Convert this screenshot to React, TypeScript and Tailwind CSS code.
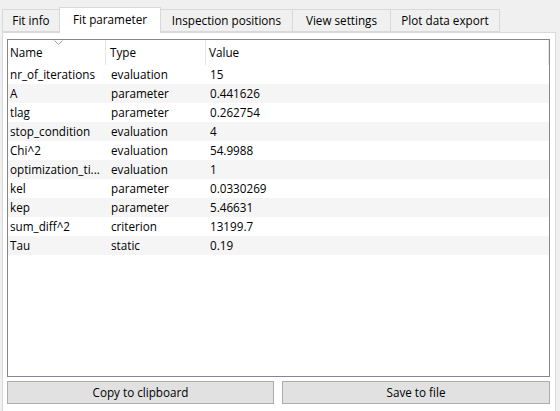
import React from "react";

const rows: [string, string, string][] = [
  ["nr_of_iterations", "evaluation", "15"],
  ["A", "parameter", "0.441626"],
  ["tlag", "parameter", "0.262754"],
  ["stop_condition", "evaluation", "4"],
  ["Chi^2", "evaluation", "54.9988"],
  ["optimization_ti...", "evaluation", "1"],
  ["kel", "parameter", "0.0330269"],
  ["kep", "parameter", "5.46631"],
  ["sum_diff^2", "criterion", "13199.7"],
  ["Tau", "static", "0.19"],
];

export default function App() {
  return (
    <div
      className="w-[560px] h-[411px] bg-[#f0f0f0] overflow-hidden text-[11.7px] text-black relative"
      style={{ fontFamily: '"Open Sans", "Noto Sans", sans-serif' }}
    >
      {/* tabs */}
      <div className="flex items-end h-[33px] pl-[2px] relative z-10">
        <div className="h-[23px] w-[57px] border border-[#d9d9d9] border-r-0 bg-[#f0f0f0] flex items-center justify-center mb-[1px]">
          Fit info
        </div>
        <div className="h-[26px] w-[102px] border border-[#d9d9d9] border-b-0 bg-white flex items-center justify-center pb-[2px]">
          Fit parameter
        </div>
        <div className="h-[23px] w-[132px] border border-[#d9d9d9] border-l-0 bg-[#f0f0f0] flex items-center justify-center mb-[1px]">
          Inspection positions
        </div>
        <div className="h-[23px] w-[98px] border border-[#d9d9d9] border-l-0 bg-[#f0f0f0] flex items-center justify-center mb-[1px]">
          View settings
        </div>
        <div className="h-[23px] w-[109px] border border-[#d9d9d9] border-l-0 bg-[#f0f0f0] flex items-center justify-center mb-[1px]">
          Plot data export
        </div>
      </div>
      {/* pane */}
      <div className="-mt-[1px] ml-[2px] w-[554px] h-[400px] border border-[#d9d9d9] bg-white pt-[6px] pl-[4px]">
        <div className="w-[543px] h-[338px] border border-[#828790] bg-white relative">
          {/* header */}
          <div className="flex h-[25px] items-center relative">
            <div className="w-[98px] h-full pl-[2px] flex items-center border-r border-[#e5e5e5]">Name</div>
            <div className="w-[100px] h-full pl-[4px] flex items-center border-r border-[#e5e5e5]">Type</div>
            <div className="flex-1 h-full pl-[3px] flex items-center border-r border-[#e5e5e5]">Value</div>
            <svg className="absolute left-[46px] top-[0px]" width="9" height="5" viewBox="0 0 9 5">
              <path d="M0.5 0.5 L4.5 4.5 L8.5 0.5" stroke="#a0a0a0" strokeWidth="1" fill="none" />
            </svg>
          </div>
          {rows.map((r, i) => (
            <div
              key={i}
              className={`flex h-[19px] items-center ${i % 2 === 1 ? "bg-[#f5f5f5]" : "bg-white"}`}
            >
              <div className="w-[98px] pl-[2px] whitespace-nowrap overflow-hidden">{r[0]}</div>
              <div className="w-[100px] pl-[5px] whitespace-nowrap">{r[1]}</div>
              <div className="flex-1 pl-[4px] whitespace-nowrap">{r[2]}</div>
            </div>
          ))}
        </div>
        <div className="flex gap-[8px] mt-[4px] w-[543px]">
          <button className="h-[23px] w-[267px] bg-[#e1e1e1] border border-[#adadad] flex items-center justify-center">
            Copy to clipboard
          </button>
          <button className="h-[23px] flex-1 bg-[#e1e1e1] border border-[#adadad] flex items-center justify-center">
            Save to file
          </button>
        </div>
      </div>
    </div>
  );
}
